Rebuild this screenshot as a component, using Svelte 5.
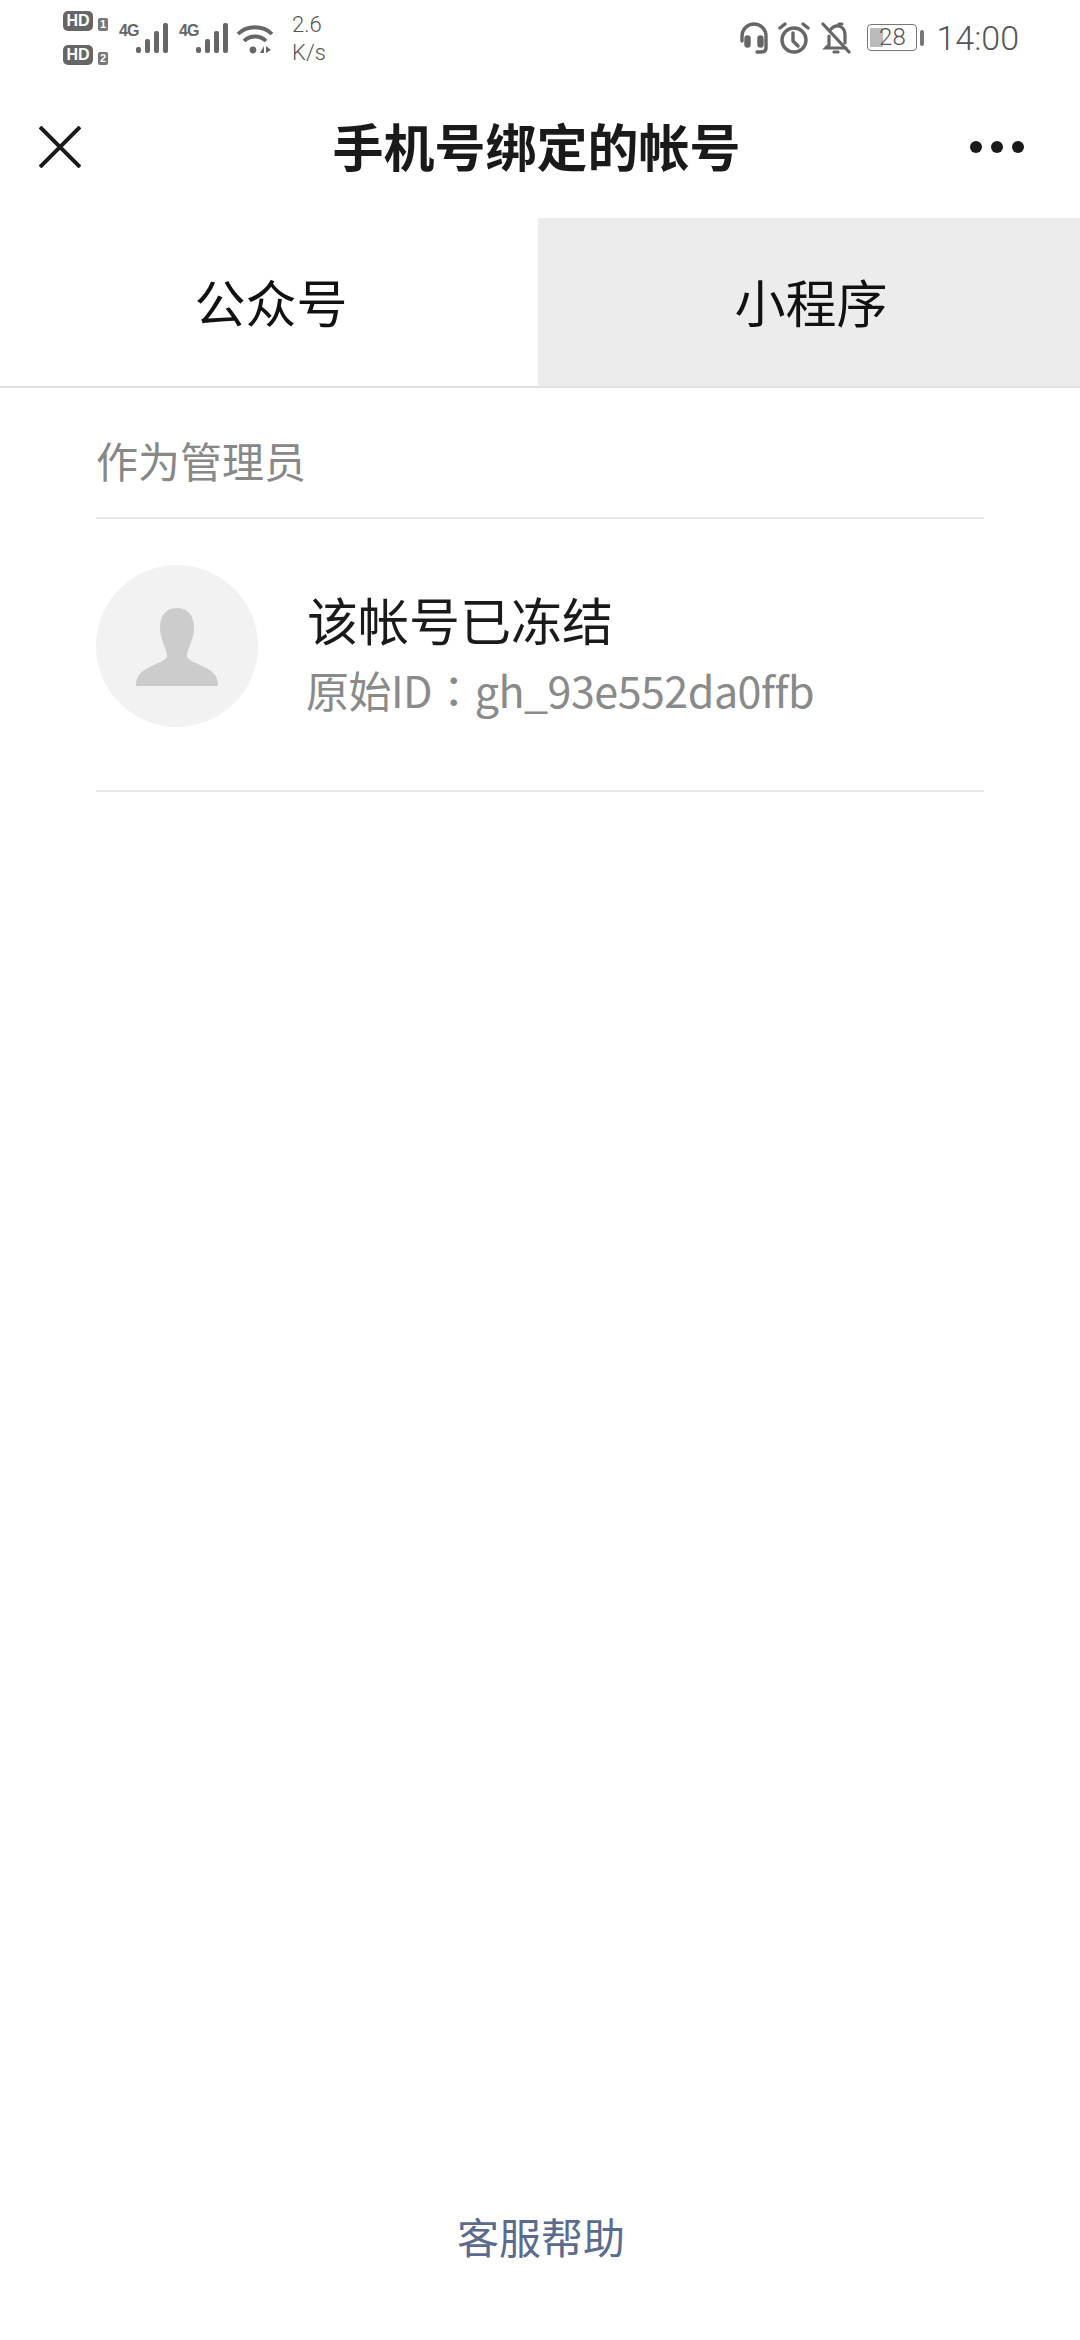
<script lang="ts">
	const bars = [
		{ x: 0, h: 6 },
		{ x: 9, h: 14 },
		{ x: 18, h: 22 },
		{ x: 27, h: 30 }
	];
	const sims = ['1', '2'];
</script>

<main class="page">
	<header class="status">
		<div class="status-left">
			<div class="sims">
				{#each sims as sim (sim)}
					<div class="sim"><span class="hd">HD</span><span class="sim-no">{sim}</span></div>
				{/each}
			</div>
			{#each [0, 1] as n (n)}
				<div class="net">
					<span class="net-label">4G</span>
					<svg width="32" height="30" viewBox="0 0 32 30">
						{#each bars as bar (bar.x)}
							<rect x={bar.x} y={30 - bar.h} width="5" height={bar.h} rx="2" fill="#666" />
						{/each}
					</svg>
				</div>
			{/each}
			<svg class="wifi" width="38" height="32" viewBox="0 0 38 32" fill="none" stroke="#666" stroke-width="3.8">
				<path d="M2 11C11 2 27 2 36 11" />
				<path d="M8 18C14 12 24 12 30 18" />
				<circle cx="17" cy="27" r="3.4" fill="#666" stroke="none" />
				<path d="M24 30l4-7v7zM30 23l5 4-5 3z" fill="#666" stroke="none" />
			</svg>
			<div class="speed"><span>2.6</span><span>K/s</span></div>
		</div>
		<div class="status-right">
			<svg width="30" height="32" viewBox="0 0 30 32" fill="none" stroke="#666" stroke-width="3.4" stroke-linecap="round">
				<path d="M3 19V14a12 12 0 0 1 24 0v12c0 3-2 4-5 4h-4" />
				<rect x="7" y="15" width="3" height="9" rx="1.5" fill="#666" />
				<rect x="20" y="15" width="3" height="9" rx="1.5" fill="#666" />
			</svg>
			<svg class="alarm" width="32" height="32" viewBox="0 0 32 32" fill="none" stroke="#666" stroke-width="3.4" stroke-linecap="round">
				<circle cx="16" cy="18" r="12" />
				<path d="M15 11v8l5 5M2 6l5-4M30 6l-5-4" />
			</svg>
			<svg class="bell" width="30" height="32" viewBox="0 0 30 32" fill="none" stroke="#666" stroke-width="3.2" stroke-linecap="round">
				<path d="M2 2l26 28" />
				<path d="M8 14v9l-3 3h20M10 7c5-6 14-3 14 6v8" />
				<path d="M13 30h4" />
				<path d="M18 2l3 0" />
			</svg>
			<div class="battery">
				<div class="cell">
					<span class="charge"></span>
					<span class="level">28</span>
				</div>
				<span class="nub"></span>
			</div>
			<span class="clock">14:00</span>
		</div>
	</header>

	<nav class="titlebar">
		<svg class="close" width="42" height="42" viewBox="0 0 42 42" stroke="#1a1a1a" stroke-width="4">
			<path d="M1 1l40 40M41 1L1 41" />
		</svg>
		<h1>手机号绑定的帐号</h1>
		<div class="more"><i></i><i></i><i></i></div>
	</nav>

	<div class="tabs">
		<div class="tab">公众号</div>
		<div class="tab off">小程序</div>
	</div>

	<section class="list">
		<div class="list-title">作为管理员</div>
		<div class="account">
			<div class="avatar">
				<svg width="82" height="78" viewBox="0 0 82 78" fill="#ccc">
					<path d="M41 0c12 0 17 9 17 20 0 12-7 21-7 28 0 5 14 8 24 15 5 4 7 8 7 15H0c0-7 2-11 7-15 10-7 24-10 24-15 0-7-7-16-7-28C24 9 29 0 41 0z" />
				</svg>
			</div>
			<div class="info">
				<div class="name">该帐号已冻结</div>
				<div class="raw-id">原始ID<span class="colon">：</span>gh_93e552da0ffb</div>
			</div>
		</div>
	</section>

	<footer class="help">客服帮助</footer>
</main>

<style>
	:global(body) {
		margin: 0;
		background: #fff;
	}

	.page {
		position: relative;
		width: 1080px;
		height: 2340px;
		background: #fff;
		font-family: "Noto Sans CJK SC", "Noto Sans", sans-serif;
		color: #1a1a1a;
		overflow: hidden;
		display: flex;
		flex-direction: column;
	}

	.status {
		height: 74px;
		box-sizing: border-box;
		padding: 0 61px 0 63px;
		display: flex;
		justify-content: space-between;
		align-items: center;
		color: #666;
	}

	.status-left,
	.status-right {
		display: flex;
		align-items: center;
	}

	.sims {
		display: flex;
		flex-direction: column;
		gap: 14px;
		margin-right: 11px;
		margin-top: 1px;
	}

	.sim {
		display: flex;
		align-items: flex-end;
		gap: 5px;
		font-family: "Liberation Sans", sans-serif;
		font-weight: 700;
	}

	.hd {
		width: 30px;
		height: 20px;
		border-radius: 5px;
		background: #666;
		color: #fff;
		font-size: 16px;
		line-height: 20px;
		text-align: center;
	}

	.sim-no {
		width: 10px;
		height: 13px;
		border-radius: 2px;
		background: #777;
		color: #fff;
		font-size: 11px;
		line-height: 13px;
		text-align: center;
	}

	.net {
		display: flex;
		align-items: flex-end;
		margin-right: 11px;
		height: 30px;
		margin-top: 2px;
	}

	.net-label {
		align-self: flex-start;
		width: 17px;
		font-family: "Liberation Sans", sans-serif;
		font-size: 16px;
		font-weight: 700;
		line-height: 16px;
		letter-spacing: -1px;
		color: #666;
	}

	.wifi {
		margin-left: -3px;
		margin-top: 4px;
	}

	.speed {
		display: flex;
		flex-direction: column;
		margin: 3px 0 0 18px;
		font-family: Roboto, sans-serif;
		font-weight: 300;
		font-size: 22px;
		line-height: 28px;
		color: #555;
	}

	.status-right {
		gap: 12px;
		margin-top: 1px;
	}

	.alarm {
		margin-left: -2.5px;
	}

	.bell {
		margin-left: -1px;
	}

	.battery {
		display: flex;
		align-items: center;
		gap: 3px;
		margin-left: 4px;
	}

	.cell {
		position: relative;
		width: 50px;
		height: 27px;
		box-sizing: border-box;
		border: 1.5px solid #777;
		border-radius: 4px;
	}

	.charge {
		position: absolute;
		left: 2px;
		top: 3px;
		bottom: 3px;
		width: 13px;
		background: #bbb;
	}

	.level {
		position: absolute;
		inset: 0;
		text-align: center;
		font-family: Roboto, sans-serif;
		font-weight: 300;
		font-size: 24px;
		line-height: 24px;
		color: #555;
	}

	.nub {
		width: 4px;
		height: 16px;
		border-radius: 2px;
		background: #777;
	}

	.clock {
		font-family: Roboto, sans-serif;
		font-weight: 300;
		font-size: 34px;
		color: #555;
	}

	.titlebar {
		height: 144px;
		position: relative;
		display: flex;
		justify-content: center;
		align-items: center;
	}

	h1 {
		margin: -2px 0 0 -7px;
		font-size: 51px;
		font-weight: 700;
		color: #1a1a1a;
	}

	.close {
		position: absolute;
		left: 39px;
		top: 52px;
	}

	.more {
		position: absolute;
		left: 970px;
		top: 67px;
		display: flex;
		gap: 9px;
	}

	.more i {
		width: 12px;
		height: 12px;
		border-radius: 50%;
		background: #1a1a1a;
	}

	.tabs {
		display: flex;
		height: 168px;
		border-bottom: 2px solid #e2e2e2;
	}

	.tab {
		flex: 1;
		display: flex;
		justify-content: center;
		align-items: center;
		font-size: 51px;
		padding: 0 0 2px 4px;
		color: #111;
	}

	.tab.off {
		flex: 0 0 542px;
		box-sizing: border-box;
		background: #ececec;
	}

	.list {
		margin: 0 96px;
	}

	.list-title {
		height: 131px;
		box-sizing: border-box;
		padding-top: 45px;
		font-size: 42px;
		line-height: 54px;
		color: #888;
		border-bottom: 2px solid #e8e8e8;
	}

	.account {
		height: 273px;
		box-sizing: border-box;
		padding-top: 46px;
		display: flex;
		gap: 50px;
		border-bottom: 2px solid #e8e8e8;
	}

	.avatar {
		width: 162px;
		height: 162px;
		border-radius: 50%;
		background: #f2f2f2;
		display: flex;
		justify-content: center;
		padding-top: 43px;
		box-sizing: border-box;
	}

	.info {
		padding-top: 18px;
	}

	.name {
		font-size: 51px;
		line-height: 72px;
		margin-left: -1px;
		color: #1a1a1a;
	}

	.raw-id {
		margin: 3px 0 0 -2px;
		font-size: 43px;
		line-height: 62px;
		letter-spacing: -0.5px;
		color: #8a8a8a;
	}

	.colon {
		font-family: "Noto Sans CJK TC", sans-serif;
	}

	.help {
		position: absolute;
		left: 0;
		right: 0;
		top: 2205px;
		text-align: center;
		font-size: 42px;
		line-height: 62px;
		padding-left: 2px;
		color: #5a6b8e;
	}
</style>
